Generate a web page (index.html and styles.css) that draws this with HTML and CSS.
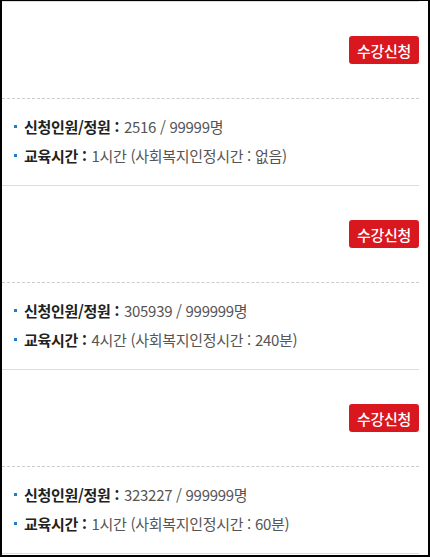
FILE: index.html
```html
<!DOCTYPE html>
<html lang="ko">
<head>
  <meta charset="UTF-8" />
  <meta name="viewport" content="width=device-width, initial-scale=1.0" />
  <title>교육과정 목록</title>
  <link rel="stylesheet" href="styles.css">
</head>
<body>
  <div class="frame">
    <ul class="course-list">
      <li class="course">
        <div class="course-top"><a class="btn-apply" href="#">수강신청</a></div>
        <div class="course-info">
          <p class="info-row"><strong>신청인원/정원 :</strong> 2516 / 99999명</p>
          <p class="info-row"><strong>교육시간 :</strong> 1시간 (사회복지인정시간 : 없음)</p>
        </div>
      </li>
      <li class="course">
        <div class="course-top"><a class="btn-apply" href="#">수강신청</a></div>
        <div class="course-info">
          <p class="info-row"><strong>신청인원/정원 :</strong> 305939 / 999999명</p>
          <p class="info-row"><strong>교육시간 :</strong> 4시간 (사회복지인정시간 : 240분)</p>
        </div>
      </li>
      <li class="course">
        <div class="course-top"><a class="btn-apply" href="#">수강신청</a></div>
        <div class="course-info">
          <p class="info-row"><strong>신청인원/정원 :</strong> 323227 / 999999명</p>
          <p class="info-row"><strong>교육시간 :</strong> 1시간 (사회복지인정시간 : 60분)</p>
        </div>
      </li>
    </ul>
  </div>
</body>
</html>
```

FILE: styles.css
```css
body { margin: 0; background: #fff; font-family: "Noto Sans CJK KR", "Noto Sans", sans-serif; }
.frame {
  box-sizing: border-box; height: 557px; overflow: hidden;
  border: 2px solid #000; border-top-width: 1px;
  padding-right: 9px;
}
.course-list { list-style: none; margin: 0; padding: 0; border-top: 1px solid #ddd; }
.course { border-bottom: 1px solid #ddd; }
.course-top {
  height: 96px;
  display: flex; align-items: center; justify-content: flex-end;
}
.btn-apply {
  display: inline-flex; align-items: center;
  height: 28px; padding: 0 8px;
  background: #d9171f; color: #fff; border-radius: 3px;
  font-size: 15px; font-weight: 500; letter-spacing: -0.3px; text-decoration: none;
}
.course-info { border-top: 1px dashed #ccc; padding: 13px 0 15px 12px; }
.info-row {
  margin: 0; display: flex; align-items: center; gap: 5px;
  height: 29px; font-size: 15px; color: #555; letter-spacing: -0.3px;
}
.info-row::before {
  content: ""; width: 3px; height: 3px; margin: 0 2px 0 0;
  background: #1e7ccd;
}
.info-row strong { color: #222; font-weight: 700; }
```
